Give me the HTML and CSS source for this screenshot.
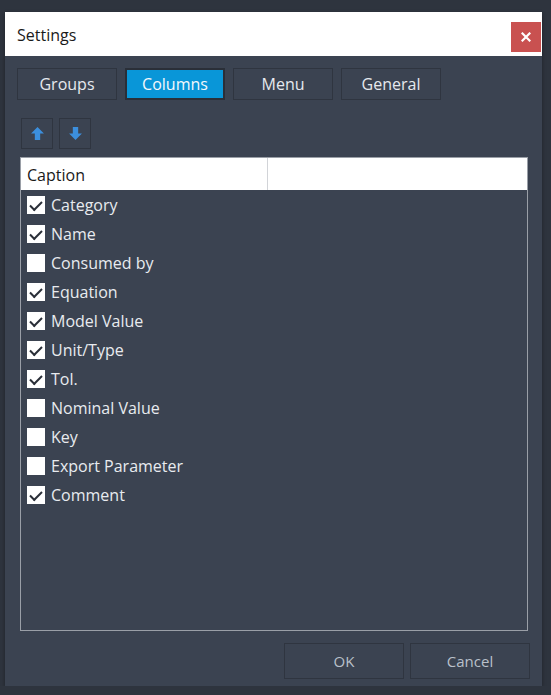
FILE: index.html
```html
<!DOCTYPE html>
<html>
<head>
<meta charset="utf-8">
<link rel="stylesheet" href="styles.css">
</head>
<body>
<div class="window">
  <div class="titlebar">
    <span class="title">Settings</span>
    <div class="close"><svg width="10" height="10" viewBox="0 0 10 10"><path d="M1.5 1.5 L8.5 8.5 M8.5 1.5 L1.5 8.5" stroke="#fff" stroke-width="2.2" stroke-linecap="square"/></svg></div>
  </div>
  <div class="tabs">
    <div class="tab">Groups</div>
    <div class="tab active">Columns</div>
    <div class="tab">Menu</div>
    <div class="tab">General</div>
  </div>
  <div class="toolbar">
    <div class="tbtn"><svg width="15" height="15" viewBox="0 0 14 14"><path d="M7 1 L13 7 L9.5 7 L9.5 13 L4.5 13 L4.5 7 L1 7 Z" fill="#3c8fdd"/></svg></div>
    <div class="tbtn"><svg width="15" height="15" viewBox="0 0 14 14"><path d="M7 13 L13 7 L9.5 7 L9.5 1 L4.5 1 L4.5 7 L1 7 Z" fill="#3c8fdd"/></svg></div>
  </div>
  <div class="grid">
    <div class="header">
      <div class="hcell first">Caption</div>
      <div class="hcell"></div>
    </div>
    <div class="row"><span class="cb on"></span>Category</div>
    <div class="row"><span class="cb on"></span>Name</div>
    <div class="row"><span class="cb"></span>Consumed by</div>
    <div class="row"><span class="cb on"></span>Equation</div>
    <div class="row"><span class="cb on"></span>Model Value</div>
    <div class="row"><span class="cb on"></span>Unit/Type</div>
    <div class="row"><span class="cb on"></span>Tol.</div>
    <div class="row"><span class="cb"></span>Nominal Value</div>
    <div class="row"><span class="cb"></span>Key</div>
    <div class="row"><span class="cb"></span>Export Parameter</div>
    <div class="row"><span class="cb on"></span>Comment</div>
  </div>
  <div class="footer">
    <div class="btn">OK</div>
    <div class="btn">Cancel</div>
  </div>
</div>
</body>
</html>
```
FILE: styles.css
```css
html, body {
  margin: 0;
  padding: 0;
  background: #2e343e;
  font-family: "Open Sans", "Noto Sans", sans-serif;
  font-size: 15px;
}
.window {
  margin: 12px 0 0 5px;
  width: 537px;
  height: 674px;
  background: #3b4351;
  box-shadow: 0 2px 4px rgba(0,0,0,0.35);
  display: flex;
  flex-direction: column;
}
.titlebar {
  height: 44px;
  background: #ffffff;
  display: flex;
  align-items: flex-start;
  justify-content: space-between;
  flex-shrink: 0;
}
.title {
  color: #1a1a1a;
  font-size: 16px;
  margin: 12px 0 0 12px;
}
.close {
  width: 30px;
  height: 30px;
  background: #c95150;
  margin: 10px 1px 0 0;
  display: flex;
  align-items: center;
  justify-content: center;
}
.tabs {
  display: flex;
  gap: 8px;
  margin: 12px 0 0 12px;
}
.tab {
  width: 98px;
  height: 30px;
  border: 1px solid #2f3540;
  color: #e6e9ee;
  font-size: 16px;
  display: flex;
  align-items: center;
  justify-content: center;
}
.tab.active {
  background: #0996d8;
  border: 2px solid #2a2f38;
  width: 96px;
  height: 28px;
  color: #f4f8fc;
}
.toolbar {
  display: flex;
  gap: 6px;
  margin: 18px 0 0 16px;
}
.tbtn {
  width: 30px;
  height: 29px;
  border: 1px solid #2f3540;
  display: flex;
  align-items: center;
  justify-content: center;
}
.grid {
  margin: 8px 0 0 15px;
  width: 506px;
  height: 472px;
  border: 1px solid #9a9fa7;
}
.header {
  height: 32px;
  background: #ffffff;
  display: flex;
}
.hcell {
  display: flex;
  align-items: center;
  color: #1a1a1a;
  font-size: 16px;
  flex: 1;
  padding-top: 1px;
}
.hcell.first {
  width: 240px;
  flex: none;
  padding-left: 6px;
  border-right: 1px solid #d2d4d8;
}
.row {
  height: 29px;
  display: flex;
  align-items: center;
  padding-left: 6px;
  color: #e8ebef;
  font-size: 16px;
}
.cb {
  width: 18px;
  height: 18px;
  background: #ffffff;
  margin-right: 6px;
  flex-shrink: 0;
  position: relative;
}
.cb.on::after {
  content: "";
  position: absolute;
  left: 3px;
  top: 2px;
  width: 10px;
  height: 5px;
  border-left: 2px solid #2a2f38;
  border-bottom: 2px solid #2a2f38;
  transform: translate(0, 3px) rotate(-45deg);
  transform-origin: center;
}
.footer {
  display: flex;
  justify-content: flex-end;
  gap: 6px;
  margin: 12px 12px 0 0;
}
.btn {
  width: 118px;
  height: 34px;
  border: 1px solid #2f3540;
  color: #b9c0ca;
  font-size: 15px;
  display: flex;
  align-items: center;
  justify-content: center;
}
```
